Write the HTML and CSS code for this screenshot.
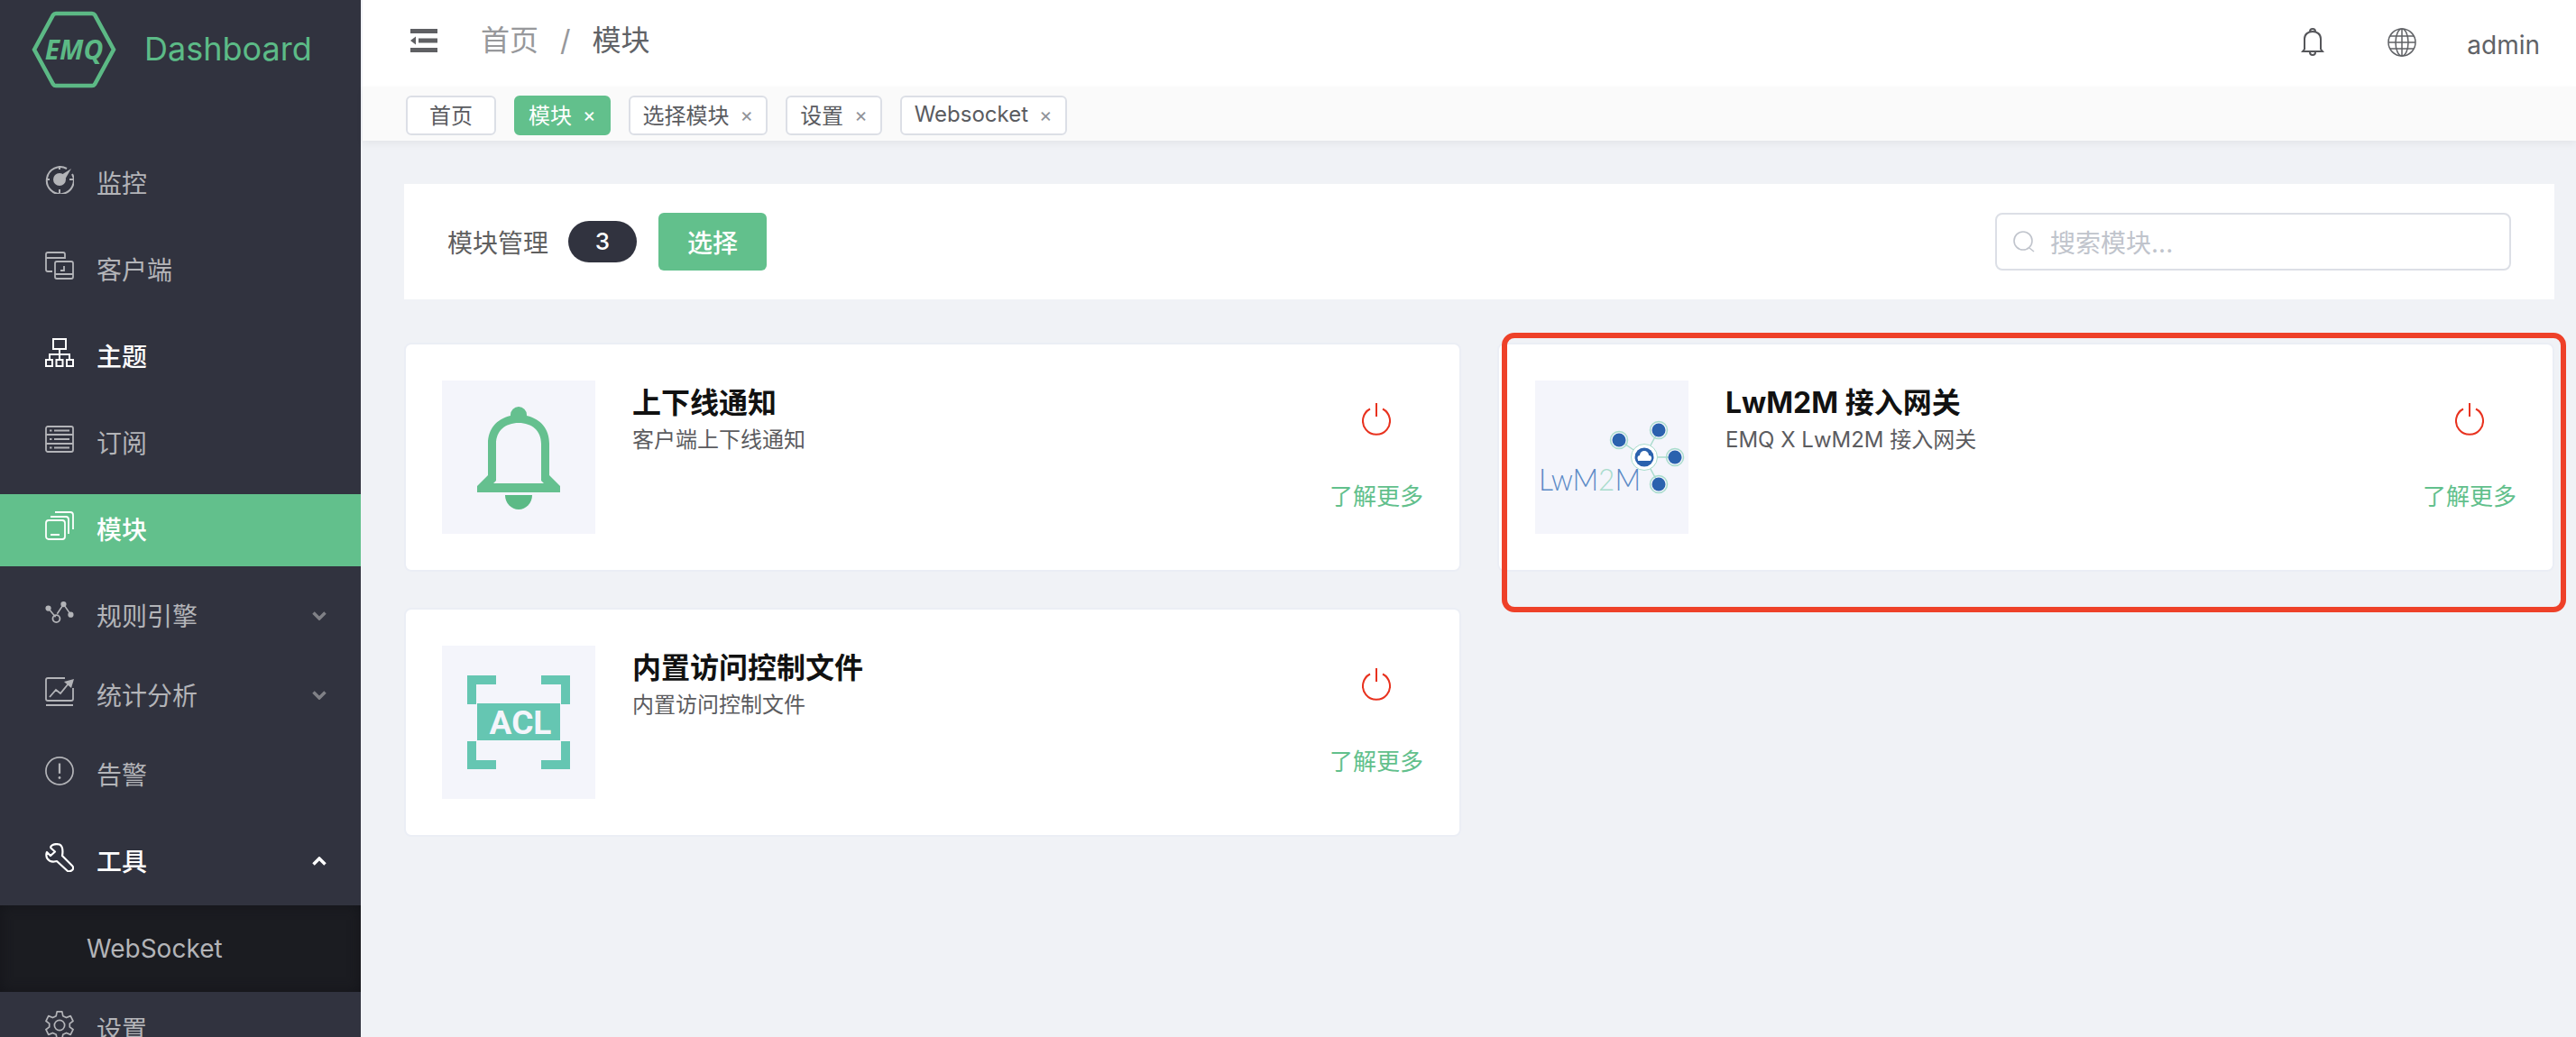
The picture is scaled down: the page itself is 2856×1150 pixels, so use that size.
FILE: index.html

```html
<!DOCTYPE html>
<html lang="zh">
<head>
    <meta charset="UTF-8">
    <title>EMQ Dashboard | 模块</title>
    <link rel="stylesheet" href="styles.css">
</head>
<body>
    <aside class="sidebar">
        <div class="logo">
            <svg class="logo-mark" width="94" height="86" viewBox="0 0 94 86">
                <path d="M3 43 24 4.500Q25 3 27 3H67Q69 3 70 4.500L91 43 70 81.500Q69 83 67 83H27Q25 83 24 81.500Z" fill="none" stroke="#5cb985" stroke-width="4.500"/>
                <text class="logo-text" x="47" y="54">EMQ</text>
            </svg>
            <span class="logo-title">Dashboard</span>
        </div>
        <nav class="nav">
            <a class="nav-item">
                <svg class="nav-icon" viewBox="0 0 32 32" fill="none" stroke="currentColor" stroke-width="2"><path d="M24 4A15 15 0 1 0 30 10"/><path d="M16 1v4M16 27v4M1 16h4M27 16h4"/><circle cx="16" cy="16" r="6" fill="currentColor"/><path d="M18 11 29 4 22 16Z" fill="currentColor" stroke="none"/></svg>
                <span>监控</span>
            </a>
            <a class="nav-item">
                <svg class="nav-icon" viewBox="0 0 32 32" fill="none" stroke="currentColor" stroke-width="1.800"><path d="M8 22H3Q1 22 1 20V3Q1 1 3 1H20Q22 1 22 3V8M1 7H22"/><path d="M13 11H29Q31 11 31 13V28Q31 30 29 30H13Q11 30 11 28V13Q11 11 13 11ZM11 25H31M17 21H21V16"/></svg>
                <span>客户端</span>
            </a>
            <a class="nav-item current">
                <svg class="nav-icon" viewBox="0 0 32 32" fill="none" stroke="currentColor" stroke-width="2"><rect x="9" y="1" width="14" height="11"/><path d="M16 12V18M5 24V18H27V24M16 18V24"/><rect x="1" y="24" width="7" height="7"/><rect x="12.500" y="24" width="7" height="7"/><rect x="24" y="24" width="7" height="7"/></svg>
                <span>主题</span>
            </a>
            <a class="nav-item">
                <svg class="nav-icon" viewBox="0 0 32 30" fill="none" stroke="currentColor" stroke-width="1.800"><rect x="1" y="1" width="30" height="28" rx="2"/><path d="M1 10H31M1 20H31M10 5.500H27M10 15H27M10 24.500H27M5 5.500H7.500M5 15H7.500M5 24.500H7.500"/></svg>
                <span>订阅</span>
            </a>
            <a class="nav-item active">
                <svg class="nav-icon" viewBox="0 0 32 32" fill="none" stroke="currentColor" stroke-width="1.800"><rect x="1" y="10" width="21" height="21" rx="3"/><path d="M6 26H16M6 6H23Q26 6 26 9V25M11 1H28Q31 1 31 4V20"/></svg>
                <span>模块</span>
            </a>
            <a class="nav-item has-sub">
                <svg class="nav-icon" viewBox="0 0 36 28" fill="currentColor"><path d="M4 9 13 20M15 16 23 4M23 4 32 17" fill="none" stroke="currentColor" stroke-width="1.800"/><circle cx="4" cy="9" r="3.500"/><circle cx="23" cy="4" r="3.500"/><circle cx="32" cy="17" r="3.500"/><circle cx="14" cy="22" r="4.500" fill="none" stroke="currentColor" stroke-width="2"/></svg>
                <span>规则引擎</span>
                <svg class="chevron" viewBox="0 0 16 10" fill="none" stroke="currentColor" stroke-width="3.500"><path d="M1.500 1.500 8 8 14.500 1.500"/></svg>
            </a>
            <a class="nav-item has-sub">
                <svg class="nav-icon" viewBox="0 0 32 32" fill="none" stroke="currentColor" stroke-width="1.800"><path d="M22 1H3Q1 1 1 3V24Q1 26 3 26H29Q31 26 31 24V12M1 31H31M5 22 12 14 17 18 26 7"/><path d="M21 5 32 2 29 12Z" fill="currentColor" stroke="none"/></svg>
                <span>统计分析</span>
                <svg class="chevron" viewBox="0 0 16 10" fill="none" stroke="currentColor" stroke-width="3.500"><path d="M1.500 1.500 8 8 14.500 1.500"/></svg>
            </a>
            <a class="nav-item">
                <svg class="nav-icon" viewBox="0 0 34 34" fill="none" stroke="currentColor" stroke-width="1.800"><circle cx="17" cy="17" r="16"/><path d="M17 8V20" stroke-width="2.400"/><circle cx="17" cy="25" r="1.500" fill="currentColor" stroke="none"/></svg>
                <span>告警</span>
            </a>
            <a class="nav-item current has-sub">
                <svg class="nav-icon" viewBox="0 0 32 32" fill="none" stroke="currentColor" stroke-width="2.200"><path d="M16 1.500C10 0 5 3 6.500 5.500L11 9.500 6 14 2 10C0 15 3 21 10 20.500L13 20 25 31Q28 32 30.500 29.500 32 27 30 25L19 14C20 8 19 3 16 1.500Z" stroke-linejoin="round"/></svg>
                <span>工具</span>
                <svg class="chevron" viewBox="0 0 16 10" fill="none" stroke="currentColor" stroke-width="3.500"><path d="M1.500 8.500 8 2 14.500 8.500"/></svg>
            </a>
            <div class="submenu">
                <a class="submenu-item">WebSocket</a>
            </div>
            <a class="nav-item">
                <svg class="nav-icon" viewBox="0 0 34 34" fill="none" stroke="currentColor" stroke-width="1.800"><path d="M14 1H20L21 6 25 8 30 6 33 12 29 15V19L33 22 30 28 25 26 21 28 20 33H14L13 28 9 26 4 28 1 22 5 19V15L1 12 4 6 9 8 13 6Z" stroke-linejoin="round"/><circle cx="17" cy="17" r="6"/></svg>
                <span>设置</span>
            </a>
        </nav>
    </aside>

    <div class="page">
        <header class="topbar">
            <svg class="toggle" width="30" height="26" viewBox="0 0 30 26" fill="#5f6063"><rect width="30" height="5"/><rect y="21" width="30" height="5"/><rect x="9" y="10.500" width="21" height="5"/><path d="M0 13 6 8.500V17.500Z"/></svg>
            <div class="breadcrumb">
                <span class="crumb">首页</span>
                <span class="crumb-sep">/</span>
                <span class="crumb-now">模块</span>
            </div>
            <div class="topbar-right">
                <svg class="top-icon" width="26" height="32" viewBox="0 0 26 32" fill="none" stroke="#55565a" stroke-width="2"><path d="M2 26 4 23.500V12C4 7 8 4 13 4S22 7 22 12V23.500L24 26ZM10 4Q10 1 13 1T16 4M10 27Q10 30 13 30T16 27"/></svg>
                <svg class="top-icon" width="32" height="32" viewBox="0 0 32 32" fill="none" stroke="#606266" stroke-width="1.500"><circle cx="16" cy="16" r="15"/><ellipse cx="16" cy="16" rx="7" ry="15"/><path d="M16 1V31M1 16H31M3 9H29M3 23H29"/></svg>
                <span class="user">admin</span>
            </div>
        </header>

        <div class="tags">
            <span class="tag tag-home">首页</span>
            <span class="tag active">模块<i>×</i></span>
            <span class="tag">选择模块<i>×</i></span>
            <span class="tag">设置<i>×</i></span>
            <span class="tag">Websocket<i>×</i></span>
        </div>

        <main class="content">
            <section class="panel">
                <span class="panel-title">模块管理</span>
                <span class="badge">3</span>
                <button class="btn-select">选择</button>
                <div class="search">
                    <svg width="24" height="24" viewBox="0 0 24 24" fill="none" stroke="#c0c4cc" stroke-width="1.600"><circle cx="11" cy="11" r="10"/><path d="M18 19 23 23"/></svg>
                    <span>搜索模块...</span>
                </div>
            </section>

            <section class="modules">
                <div class="module-card">
                    <div class="module-img">
                        <svg width="170" height="170" viewBox="0 0 170 170">
                            <path fill="#65c08f" fill-rule="evenodd" d="M39 124V117L51 105V70C51 54 60 43 76 39V38A9 9 0 0 1 94 38V39C110 43 119 54 119 70V105L131 117V124ZM57 114H113L110 111V70C110 56 100 47 85 47S60 56 60 70V111Z"/>
                            <path fill="#5cba86" d="M70 127H100A15 16 0 0 1 70 127Z"/>
                        </svg>
                    </div>
                    <div class="module-body">
                        <h3>上下线通知</h3>
                        <p>客户端上下线通知</p>
                    </div>
                    <div class="module-action">
                        <svg class="power" width="32" height="36" viewBox="0 0 32 36" fill="none" stroke="#e8321f" stroke-width="2"><path d="M9 6.500A15 15 0 1 0 23 6.500M16 0V15"/></svg>
                        <a class="more">了解更多</a>
                    </div>
                </div>

                <div class="module-card">
                    <div class="module-img">
                        <svg width="170" height="170" viewBox="0 0 170 170">
                            <g stroke="#a9dccd" stroke-width="1.500" fill="none">
                                <path d="M93 66 121 85M137 55 121 85M155 85H121M137 115 121 85"/>
                                <circle cx="93" cy="66" r="9.500"/><circle cx="137" cy="55" r="9.500"/><circle cx="155" cy="85" r="9.500"/><circle cx="137" cy="115" r="9.500"/>
                            </g>
                            <circle cx="121" cy="85" r="14.500" fill="#fff" stroke="#a9dccd" stroke-width="1"/>
                            <g fill="#2b62ae">
                                <circle cx="93" cy="66" r="7.500"/><circle cx="137" cy="55" r="7.500"/><circle cx="155" cy="85" r="7.500"/><circle cx="137" cy="115" r="7.500"/>
                                <circle cx="121" cy="85" r="10.500"/>
                            </g>
                            <g fill="#fff">
                                <circle cx="116.500" cy="86" r="3"/>
                                <circle cx="121" cy="83" r="5"/>
                                <circle cx="126" cy="86" r="3"/>
                                <rect x="114" y="85" width="14" height="4"/>
                            </g>
                            <text class="lwm2m-text" x="4" y="122" textLength="113" lengthAdjust="spacingAndGlyphs">LwM<tspan class="lwm2m-two">2</tspan>M</text>
                        </svg>
                    </div>
                    <div class="module-body">
                        <h3>LwM2M 接入网关</h3>
                        <p>EMQ X LwM2M 接入网关</p>
                    </div>
                    <div class="module-action">
                        <svg class="power" width="32" height="36" viewBox="0 0 32 36" fill="none" stroke="#e8321f" stroke-width="2"><path d="M9 6.500A15 15 0 1 0 23 6.500M16 0V15"/></svg>
                        <a class="more">了解更多</a>
                    </div>
                    <div class="annotation"></div>
                </div>

                <div class="module-card">
                    <div class="module-img">
                        <svg width="170" height="170" viewBox="0 0 170 170">
                            <path fill="#65c6b2" d="M28 33H60V43H38V65H28ZM142 33H110V43H132V65H142ZM28 137H60V127H38V106H28ZM142 137H110V127H132V106H142ZM39 64H131V105H39Z"/>
                            <text class="acl-text" x="87" y="98">ACL</text>
                        </svg>
                    </div>
                    <div class="module-body">
                        <h3>内置访问控制文件</h3>
                        <p>内置访问控制文件</p>
                    </div>
                    <div class="module-action">
                        <svg class="power" width="32" height="36" viewBox="0 0 32 36" fill="none" stroke="#e8321f" stroke-width="2"><path d="M9 6.500A15 15 0 1 0 23 6.500M16 0V15"/></svg>
                        <a class="more">了解更多</a>
                    </div>
                </div>
            </section>
        </main>
    </div>
</body>
</html>
```

FILE: styles.css

```css
* {
    box-sizing: border-box;
}
html, body {
    height: 100%;
}
body {
    margin: 0;
    display: flex;
    overflow: hidden;
    background: #f0f2f6;
    color: #606266;
    font-family: Inter, "Noto Sans CJK SC", sans-serif;
    font-size: 28px;
}

/* sidebar */
.sidebar {
    width: 400px;
    flex-shrink: 0;
    height: 100%;
    overflow: hidden;
    background: #31333f;
}
.logo {
    height: 164px;
    padding: 12px 0 0 35px;
    display: flex;
    align-items: flex-start;
}
.logo-mark {
    flex-shrink: 0;
}
.logo-text {
    font-family: "Open Sans", sans-serif;
    font-size: 30px;
    font-weight: 700;
    font-style: italic;
    fill: #5cb985;
    text-anchor: middle;
}
.logo-title {
    margin: 20px 0 0 31px;
    color: #5cbb87;
    font-size: 36px;
    line-height: 44px;
}
.nav-item {
    display: flex;
    align-items: center;
    height: 80px;
    margin-bottom: 16px;
    padding: 0 38px 0 50px;
    color: #b3b4b8;
    line-height: 40px;
}
.nav-item span {
    flex: 1;
    margin-left: 25px;
}
.nav-item.current {
    color: #fff;
    font-weight: 500;
}
.nav-item.active {
    background: #62c08c;
    color: #fff;
    font-weight: 500;
}
.nav-item.has-sub {
    margin-bottom: 8px;
}
.nav-icon {
    width: 32px;
    height: 32px;
    flex-shrink: 0;
    margin-bottom: 10px;
}
.chevron {
    width: 16px;
    height: 10px;
    color: #808187;
    margin-bottom: 2px;
}
.current .chevron {
    color: #fff;
}
.submenu {
    height: 96px;
    margin-bottom: 2px;
    background: #1b1c21;
    box-shadow: inset 0 0 14px #14151a;
}
.submenu-item {
    display: block;
    padding-left: 96px;
    color: #b3b4b8;
    line-height: 96px;
}

/* top */
.page {
    flex: 1;
    min-width: 0;
    margin-left: 2px;
}
.topbar {
    display: flex;
    align-items: center;
    height: 96px;
    padding: 0 40px 6px 53px;
    background: #fff;
}
.breadcrumb {
    display: flex;
    align-items: center;
    margin-left: 48px;
    font-size: 32px;
    line-height: 44px;
}
.crumb {
    color: #97989b;
}
.crumb-sep {
    margin: 0 24px;
    color: #97989b;
}
.crumb-now {
    color: #606266;
}
.topbar-right {
    display: flex;
    align-items: center;
    margin-left: auto;
    padding-top: 4px;
}
.top-icon {
    margin-right: 70px;
}
.top-icon + .top-icon {
    margin-right: 56px;
}
.user {
    margin-top: 6px;
    color: #606266;
}
.tags {
    display: flex;
    gap: 20px;
    height: 60px;
    padding: 10px 0 0 48px;
    background: #fafafa;
    box-shadow: 0 4px 8px rgba(0, 0, 0, 0.05);
}
.tag {
    display: flex;
    align-items: center;
    height: 44px;
    padding: 0 14px 3px;
    background: #fff;
    border: 2px solid #dcdfe6;
    border-radius: 6px;
    font-size: 24px;
    color: #5a5b5f;
}
.tag i {
    margin-left: 12px;
    font-style: normal;
    font-size: 22px;
    color: #909399;
}
.tag-home {
    padding: 0 24px 3px;
}
.tag.active {
    background: #62c08c;
    border-color: #62c08c;
    color: #fff;
}
.tag.active i {
    color: #fff;
}

/* content */
.content {
    padding: 48px 24px 0 46px;
}
.panel {
    display: flex;
    align-items: center;
    height: 128px;
    padding: 0 48px;
    background: #fff;
}
.panel-title {
    color: #5f5f5f;
}
.badge {
    width: 76px;
    height: 46px;
    margin-left: 22px;
    border-radius: 23px;
    background: #31333f;
    color: #fff;
    font-size: 26px;
    font-weight: 500;
    line-height: 46px;
    text-align: center;
}
.btn-select {
    width: 120px;
    height: 64px;
    margin-left: 24px;
    border: none;
    border-radius: 6px;
    background: #62c08c;
    color: #fff;
    font-family: inherit;
    font-size: 28px;
    font-weight: 500;
}
.search {
    display: flex;
    align-items: center;
    gap: 17px;
    width: 572px;
    height: 64px;
    margin-left: auto;
    padding-left: 18px;
    border: 2px solid #dcdfe6;
    border-radius: 8px;
    color: #c0c4cc;
}
.modules {
    display: grid;
    grid-template-columns: 1fr 1fr;
    gap: 40px;
    margin-top: 48px;
}
.module-card {
    position: relative;
    display: flex;
    height: 254px;
    padding: 40px 36px 40px 40px;
    background: #fff;
    border: 2px solid #ebeef5;
    border-radius: 8px;
}
.module-img {
    width: 170px;
    height: 170px;
    flex-shrink: 0;
    background: #f4f5fb;
}
.module-img svg {
    display: block;
}
.module-body {
    flex: 1;
    margin: 4px 0 0 41px;
}
.module-body h3 {
    margin: 0;
    color: #111;
    font-size: 32px;
    font-weight: 700;
    line-height: 42px;
}
.module-body p {
    margin: 0;
    color: #5c5c5f;
    font-size: 24px;
    line-height: 40px;
}
.module-action {
    display: flex;
    flex-direction: column;
    align-items: center;
    width: 112px;
    padding-top: 25px;
}
.power {
    display: block;
}
.more {
    margin-top: 48px;
    color: #62c08c;
    font-size: 26px;
    line-height: 40px;
}
.acl-text {
    font-family: Roboto, sans-serif;
    font-size: 37px;
    font-weight: 700;
    fill: #f4f5fb;
    text-anchor: middle;
}
.lwm2m-text {
    font-family: Lato, sans-serif;
    font-size: 34px;
    font-weight: 300;
    fill: #5b8ac6;
}
.lwm2m-two {
    fill: #a9dccd;
}

/* red box drawn on top of the screenshot */
.annotation {
    position: absolute;
    top: -13px;
    left: 3px;
    width: 1180px;
    height: 310px;
    border: 6px solid #ee4129;
    border-radius: 14px;
}
```
